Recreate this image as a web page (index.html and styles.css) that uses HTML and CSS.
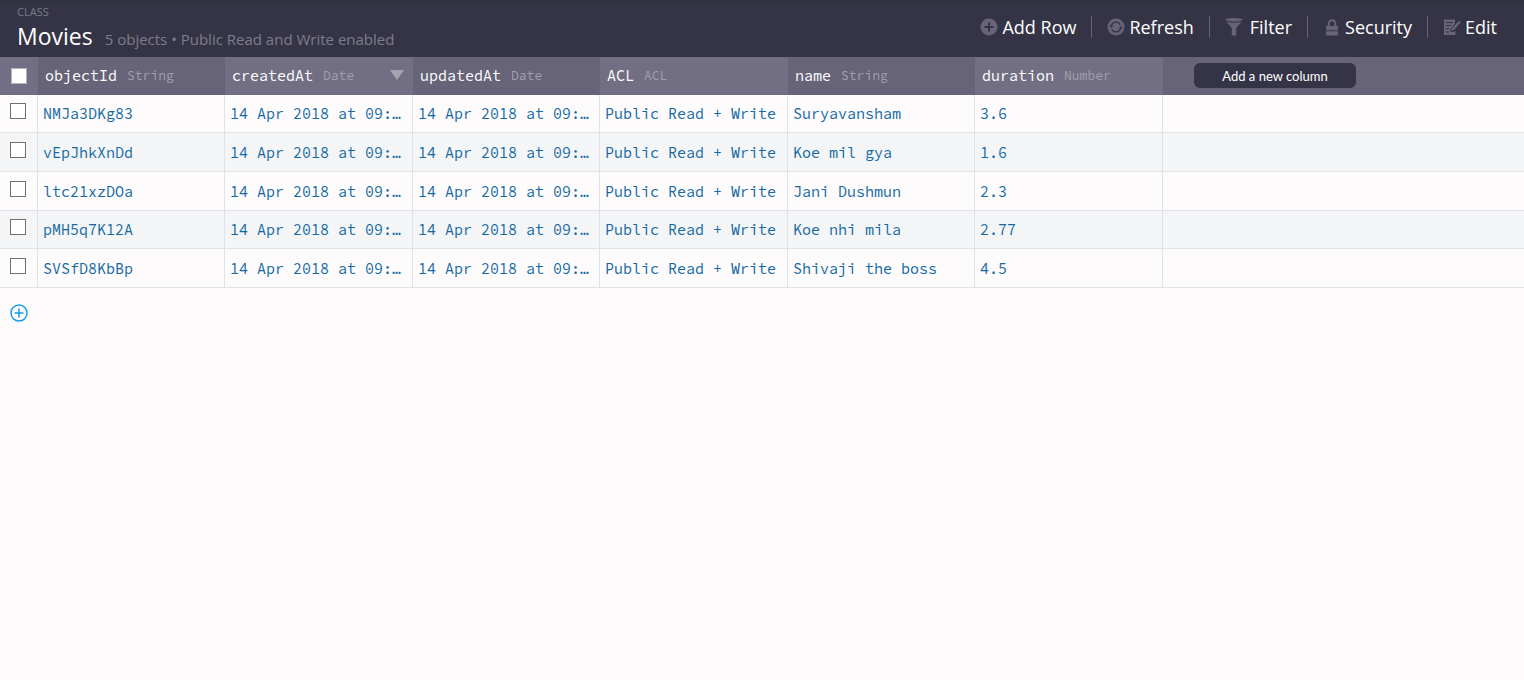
FILE: index.html
```html
<!DOCTYPE html>
<html lang="en">
<head>
<meta charset="utf-8">
<title>Movies</title>
<link rel="stylesheet" href="styles.css">
</head>
<body>
<header class="topbar">
  <div class="heading">
    <div class="section">CLASS</div>
    <div class="title-row">
      <h1 class="title">Movies</h1>
      <span class="details">5 objects • Public Read and Write enabled</span>
    </div>
  </div>
  <nav class="toolbar">
    <button class="tool" type="button">
      <svg class="icon" viewBox="0 0 18 18"><path fill-rule="evenodd" d="M9 .5a8.5 8.5 0 1 0 0 17a8.5 8.5 0 0 0 0-17zM8 4.500h2V8h3.500v2H10v3.500H8V10H4.500V8H8z"/></svg>
      <span>Add Row</span>
    </button>
    <button class="tool" type="button">
      <svg class="icon" viewBox="0 0 18 18"><circle cx="9" cy="9" r="8.500"/><path class="cut-line" d="M4.300 7.600A4.900 4.900 0 0 1 13.300 6.700M13.700 10.400A4.900 4.900 0 0 1 4.700 11.300"/><path class="cut" d="M2 7.600h4.400L4.200 10zM11.600 10.400H16L13.800 8z"/></svg>
      <span>Refresh</span>
    </button>
    <button class="tool tool-filter" type="button">
      <svg class="icon" viewBox="0 0 18 18"><ellipse cx="9" cy="1.700" rx="8.500" ry="1.700"/><path d="M1.500 4c4 1 11 1 15 0L11.200 10v7.500H6.800V10z"/></svg>
      <span>Filter</span>
    </button>
    <button class="tool" type="button">
      <svg class="icon" viewBox="0 0 18 18"><path class="shackle" d="M5.800 8V5.500a3.300 3.300 0 0 1 6.600 0V8"/><path d="M3 8h12v4.300H3zM3 13.300h12v3.200a1 1 0 0 1-1 1H4a1 1 0 0 1-1-1z"/></svg>
      <span>Security</span>
    </button>
    <button class="tool" type="button">
      <svg class="icon" viewBox="0 0 18 18"><path d="M1 1.500h11v4L7.500 11v3H11l1.500-1.500V17H1z"/><path d="M16 2.800l1.800 1.600-7 7.600-2.500.8.700-2.500z"/><path class="cut-line thin" d="M3 4.500h7M3 7.500h5M3 10.500h3M3 14h3"/></svg>
      <span>Edit</span>
    </button>
  </nav>
</header>
<main>
  <table class="grid">
    <colgroup>
      <col class="col-check"><col class="col-a"><col class="col-b"><col class="col-a"><col class="col-b"><col class="col-a"><col class="col-b"><col>
    </colgroup>
    <thead>
      <tr>
        <th class="check"><input class="box" type="checkbox" aria-label="Select all rows"></th>
        <th><div class="head"><span>objectId</span><span class="type">String</span></div></th>
        <th><div class="head"><span>createdAt</span><span class="type">Date</span><span class="sort"></span></div></th>
        <th><div class="head"><span>updatedAt</span><span class="type">Date</span></div></th>
        <th><div class="head"><span>ACL</span><span class="type">ACL</span></div></th>
        <th><div class="head"><span>name</span><span class="type">String</span></div></th>
        <th><div class="head"><span>duration</span><span class="type">Number</span></div></th>
        <th class="last"><button class="add-column" type="button">Add a new column</button></th>
      </tr>
    </thead>
    <tbody>
      <tr><td class="check"><input class="box" type="checkbox" aria-label="Select NMJa3DKg83"></td><td>NMJa3DKg83</td><td>14 Apr 2018 at 09:…</td><td>14 Apr 2018 at 09:…</td><td>Public Read + Write</td><td>Suryavansham</td><td>3.6</td><td></td></tr>
      <tr><td class="check"><input class="box" type="checkbox" aria-label="Select vEpJhkXnDd"></td><td>vEpJhkXnDd</td><td>14 Apr 2018 at 09:…</td><td>14 Apr 2018 at 09:…</td><td>Public Read + Write</td><td>Koe mil gya</td><td>1.6</td><td></td></tr>
      <tr><td class="check"><input class="box" type="checkbox" aria-label="Select ltc21xzDOa"></td><td>ltc21xzDOa</td><td>14 Apr 2018 at 09:…</td><td>14 Apr 2018 at 09:…</td><td>Public Read + Write</td><td>Jani Dushmun</td><td>2.3</td><td></td></tr>
      <tr><td class="check"><input class="box" type="checkbox" aria-label="Select pMH5q7K12A"></td><td>pMH5q7K12A</td><td>14 Apr 2018 at 09:…</td><td>14 Apr 2018 at 09:…</td><td>Public Read + Write</td><td>Koe nhi mila</td><td>2.77</td><td></td></tr>
      <tr><td class="check"><input class="box" type="checkbox" aria-label="Select SVSfD8KbBp"></td><td>SVSfD8KbBp</td><td>14 Apr 2018 at 09:…</td><td>14 Apr 2018 at 09:…</td><td>Public Read + Write</td><td>Shivaji the boss</td><td>4.5</td><td></td></tr>
    </tbody>
  </table>
  <button class="add-row" type="button" aria-label="Add a row">
    <svg class="plus" viewBox="0 0 18 18"><circle cx="9" cy="9" r="8"/><path d="M9 4.500v9M4.500 9h9"/></svg>
  </button>
</main>
</body>
</html>
```
FILE: styles.css
```css
* {
  box-sizing: border-box;
}

body {
  margin: 0;
  background: #fdfbfc;
  font-family: "Open Sans", "Noto Sans", sans-serif;
}

button {
  border: 0;
  background: none;
  font-family: inherit;
  cursor: pointer;
}

.topbar {
  display: flex;
  justify-content: space-between;
  height: 57px;
  padding: 0 12px 0 17px;
  background: linear-gradient(#302f3d, #353446 6px);
}

.section {
  padding-top: 4px;
  color: #7b7b87;
  font-size: 11px;
  line-height: 16px;
}

.title-row {
  display: flex;
  align-items: baseline;
  gap: 12px;
}

.title {
  margin: 0;
  color: #fff;
  font-size: 23px;
  font-weight: 400;
  line-height: 32px;
}

.details {
  color: #7d7d8a;
  font-size: 15px;
}

.toolbar {
  display: flex;
  align-items: center;
  padding-bottom: 4px;
}

.tool {
  display: flex;
  align-items: center;
  gap: 4px;
  height: 22px;
  padding: 0 15px;
  color: #fff;
  font-size: 18px;
  line-height: 22px;
}

.tool-filter {
  gap: 7px;
}

.tool + .tool {
  border-left: 1px solid #66637a;
}

.icon {
  width: 18px;
  height: 18px;
  fill: #66637a;
}

.cut {
  fill: #353446;
}

.cut-line {
  fill: none;
  stroke: #353446;
  stroke-width: 1.3;
}

.thin {
  stroke-width: 1;
}

.shackle {
  fill: none;
  stroke: #66637a;
  stroke-width: 2;
}

.grid {
  width: 100%;
  table-layout: fixed;
  border-collapse: separate;
  border-spacing: 0;
  font-family: "Source Code Pro", "Liberation Mono", monospace;
  font-size: 15px;
}

.col-check {
  width: 38px;
}

.col-a {
  width: 187px;
}

.col-b {
  width: 188px;
}

th {
  height: 38px;
  padding: 0 9px 2px 7px;
  background: #676379;
  color: #fff;
  font-weight: 400;
  text-align: left;
}

th:nth-child(odd) {
  background: #726f84;
}

.head {
  display: flex;
  align-items: center;
  gap: 10px;
}

.type {
  color: #a09fac;
  font-size: 13px;
}

.sort {
  margin-left: auto;
  border: 7px solid transparent;
  border-top: 10px solid #a4a5b1;
  border-bottom: 0;
}

th.last {
  padding: 0 31px 2px;
}

.add-column {
  display: block;
  width: 162px;
  height: 25px;
  padding: 2px 0 0;
  border-radius: 6px;
  background: #353446;
  color: #fff;
  font-family: Lato, sans-serif;
  font-size: 13px;
}

td {
  height: 39px;
  padding: 0 5px;
  overflow: hidden;
  border-right: 1px solid #e1e2e8;
  border-bottom: 1px solid #e1e2e8;
  color: #1469a3;
  text-overflow: ellipsis;
  white-space: nowrap;
}

td:last-child {
  border-right: 0;
}

tbody tr:nth-child(3n + 1) td {
  height: 38px;
}

tbody tr:nth-child(even) td {
  background: #f4f5f7;
}

.check {
  padding: 0 0 0 10px;
}

td.check {
  padding-bottom: 5px;
}

th.check {
  padding: 0 0 0 11px;
}

.box {
  display: block;
  width: 16px;
  height: 16px;
  margin: 0;
  appearance: none;
  border: 1px solid #707070;
  background: #fff;
}

th .box {
  border-color: #b5b5b5;
}

.add-row {
  display: block;
  margin: 16px 10px;
  padding: 0;
}

.plus {
  display: block;
  width: 18px;
  height: 18px;
  fill: none;
  stroke: #169cee;
  stroke-width: 1.5;
}
```
